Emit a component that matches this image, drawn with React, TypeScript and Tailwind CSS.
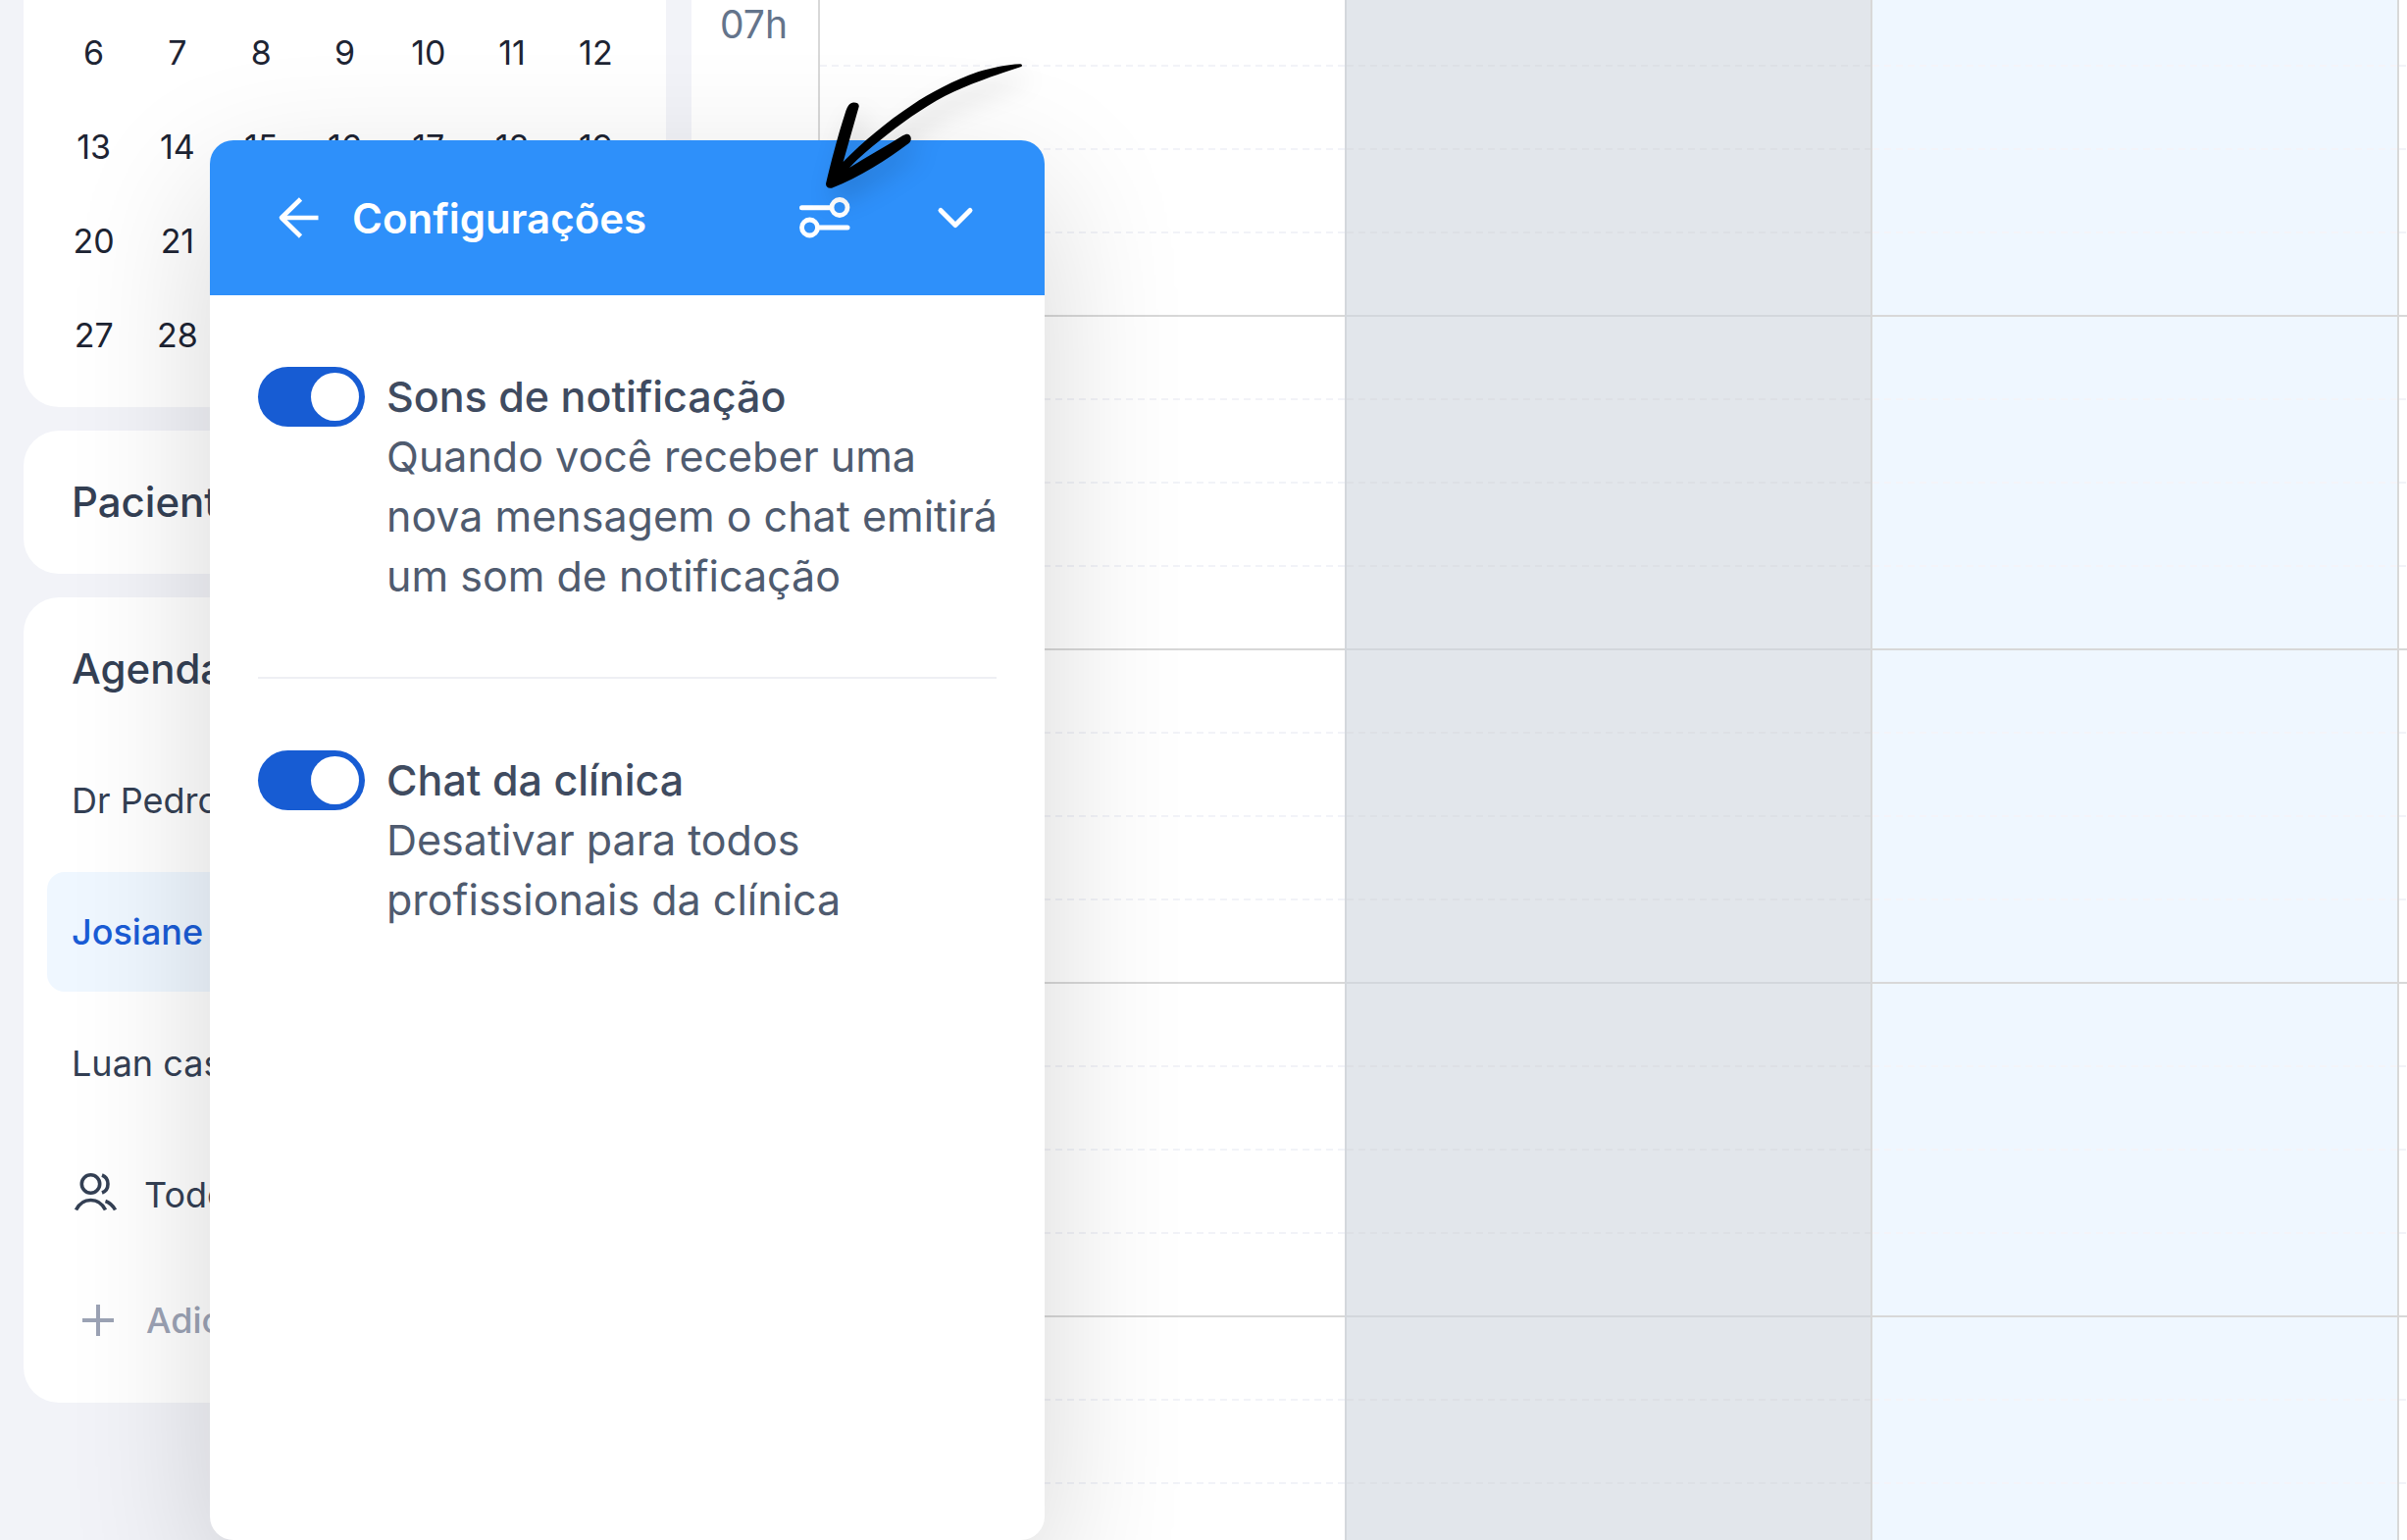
import React from "react";
import { ChevronDown } from "lucide-react";

const days = [
  6, 7, 8, 9, 10, 11, 12, 13, 14, 15, 16, 17, 18, 19, 20, 21, 22, 23, 24, 25, 26, 27, 28, 29, 30,
];

const hours = ["07h", "08h", "09h", "10h", "11h"];

const settings = [
  {
    id: "sounds",
    title: "Sons de notificação",
    description: "Quando você receber uma nova mensagem o chat emitirá um som de notificação",
  },
  {
    id: "clinic-chat",
    title: "Chat da clínica",
    description: "Desativar para todos profissionais da clínica",
  },
];

const columns = [
  {
    cell: "border-[#d8d8d8]",
    solid: "bg-[#d8d8d8]",
    dashed: "bg-[repeating-linear-gradient(90deg,#f2f3f8_0_7px,transparent_7px_12px)]",
  },
  {
    cell: "border-[#d3d7dc] bg-[#e2e6eb]",
    solid: "bg-[#d3d7dc]",
    dashed: "bg-[repeating-linear-gradient(90deg,#dde0e5_0_7px,transparent_7px_12px)]",
  },
  {
    cell: "border-[#d8d8d8] bg-[#eff7ff]",
    solid: "bg-[#d8d8d8]",
    dashed: "bg-[repeating-linear-gradient(90deg,#f4f4f9_0_7px,transparent_7px_12px)]",
  },
  {
    cell: "border-[#d8d8d8]",
    solid: "bg-[#d8d8d8]",
    dashed: "bg-[repeating-linear-gradient(90deg,#f2f3f8_0_7px,transparent_7px_12px)]",
  },
];

const BackIcon = () => (
  <svg width="44" height="44" viewBox="0 0 44 44" fill="none" stroke="currentColor" strokeWidth="4.6">
    <path d="M41.5 22H4" />
    <path d="M23.5 3L4 22L23.5 41" strokeLinejoin="round" />
  </svg>
);

const SlidersIcon = () => (
  <svg width="52" height="42" viewBox="0 0 52 42" fill="none" stroke="currentColor" strokeLinecap="round">
    <circle cx="41" cy="10.5" r="8" strokeWidth="4.8" />
    <circle cx="10.5" cy="31" r="8" strokeWidth="4.8" />
    <path d="M2.5 10.8H32M20 31H49" strokeWidth="5" />
  </svg>
);

// Drawn in the upper part of its box, so it sits a little above the label's middle
const UsersIcon = () => (
  <svg width="44" height="46" viewBox="0 0 44 46" fill="none" stroke="currentColor" strokeWidth="3.6">
    <circle cx="17.5" cy="12" r="9.2" />
    <path d="M2.5 38.5C6 31.5 11 28.5 17.5 28.5S29 31.5 32.5 38.5" />
    <path d="M29 3C33 4.5 35 8 35 12S33 19.5 29 21" />
    <path d="M32.5 29.5C37 31 40 34 42.5 38.5" />
  </svg>
);

const PlusIcon = () => (
  <svg width="34" height="34" viewBox="0 0 34 34" stroke="currentColor" strokeWidth="4">
    <path d="M17 1V33M1 17H33" />
  </svg>
);

const Sidebar = () => (
  <aside className="flex w-[655px] shrink-0 flex-col gap-6">
    <div className="grid grid-cols-7 rounded-b-[36px] bg-white px-[29px] pt-[5px] pb-[26px]">
      {days.map((day) => (
        <button key={day} className="h-24 text-[34px] text-[#1d2433]">
          {day}
        </button>
      ))}
    </div>

    <div className="rounded-[36px] bg-white px-[49px] py-[42px]">
      <h2 className="text-[42px] leading-[62px] font-medium text-[#344054]">Pacientes</h2>
    </div>

    <div className="rounded-[36px] bg-white px-6 pt-[42px] pb-[29px] text-[36px] text-[#344054]">
      <h2 className="mb-[42px] px-[25px] text-[42px] leading-[62px] font-medium">Agendas</h2>
      <nav className="flex flex-col gap-3">
        <a href="#" className="flex h-[122px] items-center px-[25px]">Dr Pedro</a>
        <a href="#" className="flex h-[122px] items-center rounded-[18px] bg-[#eff7ff] px-[25px] font-medium text-[#1a5cd6]">
          Josiane
        </a>
        <a href="#" className="flex h-[122px] items-center px-[25px]">Luan castro</a>
        <a href="#" className="flex h-[122px] items-center gap-7 px-[27px]">
          <UsersIcon />
          Todos
        </a>
        <button className="flex h-[110px] items-center gap-8 px-[35px] font-medium text-[#9ca3b5]">
          <PlusIcon />
          Adicionar
        </button>
      </nav>
    </div>
  </aside>
);

const Calendar = () => (
  <main className="grid min-w-0 flex-1 grid-cols-[129px_1fr_1fr_1fr_10px] overflow-hidden bg-white">
    <div className="-mt-[17px] text-[39px] text-[#64748b]">
      {hours.map((hour) => (
        <div key={hour} className="h-[340px] pt-[13px] pl-[29px] leading-[58px]">
          {hour}
        </div>
      ))}
    </div>
    {columns.map((column, i) => (
      <div key={i} className={`border-l-2 ${column.cell}`}>
        <div className="-mt-[17px]">
          {hours.map((hour) => (
            <div key={hour}>
              {[15, 30, 45, 60].map((minute) => (
                <div key={minute} className="flex h-[85px] flex-col justify-end">
                  <div className={`h-[2px] ${minute === 60 ? column.solid : column.dashed}`} />
                </div>
              ))}
            </div>
          ))}
        </div>
      </div>
    ))}
  </main>
);

const ChatSettings = () => (
  <section className="absolute top-[143px] bottom-0 left-[214px] w-[851px] rounded-3xl bg-white shadow-[0_49px_146px_rgba(0,0,0,0.16)]">
    <header className="flex h-[158px] items-center rounded-t-3xl bg-[#2e90fa] pr-[61px] pl-[69px] text-white">
      <button aria-label="Voltar">
        <BackIcon />
      </button>
      <h1 className="ml-8 flex-1 text-[42px] font-semibold">Configurações</h1>
      <button aria-label="Ajustes" className="mr-[77px]">
        <SlidersIcon />
      </button>
      <button aria-label="Minimizar">
        <ChevronDown size={60} />
      </button>
    </header>
    <div className="divide-y-2 divide-[#eeeff4] px-[49px]">
      {settings.map((item) => (
        <div key={item.id} className="flex items-start gap-[22px] pt-[73px] pb-[72px]">
          <input
            id={item.id}
            type="checkbox"
            role="switch"
            defaultChecked
            className="flex h-[61px] w-[109px] shrink-0 appearance-none items-center rounded-full bg-slate-300 p-[6px] before:block before:size-[49px] before:rounded-full before:bg-white checked:justify-end checked:bg-[#175cd3]"
          />
          <label htmlFor={item.id} className="-mr-4 text-[43px] leading-[61px] text-[#4f5b6f]">
            <span className="block font-medium text-[#3f4b60]">{item.title}</span>
            {item.description}
          </label>
        </div>
      ))}
    </div>
  </section>
);

// Hand-drawn arrow pointing at the settings button
const Arrow = () => (
  <svg
    className="pointer-events-none absolute top-[62px] left-[837px] overflow-visible drop-shadow-[6px_14px_12px_rgba(0,0,0,0.14)]"
    width="207"
    height="133"
    viewBox="470 186 621 399"
  >
    <path d="M1080 196C1035 198 990 208 950 220C880 243 800 287 750 320C670 373 600 432 538 495L586 326C588 316 577 312 566 314C554 318 550 328 545 343C520 420 500 500 485 562C485 572 492 577 503 575C590 540 670 490 740 437C747 430 747 420 741 413C735 408 728 411 720 415C665 450 610 480 557 513C590 478 620 454 650 430C712 379 780 330 850 293C920 259 1000 231 1080 205C1086 203 1087 197 1080 196Z" />
  </svg>
);

export default function App() {
  return (
    <div className="relative flex h-screen gap-[26px] overflow-hidden bg-[#f2f3f8] pl-6 font-[Inter,sans-serif]">
      <Sidebar />
      <Calendar />
      <ChatSettings />
      <Arrow />
    </div>
  );
}
